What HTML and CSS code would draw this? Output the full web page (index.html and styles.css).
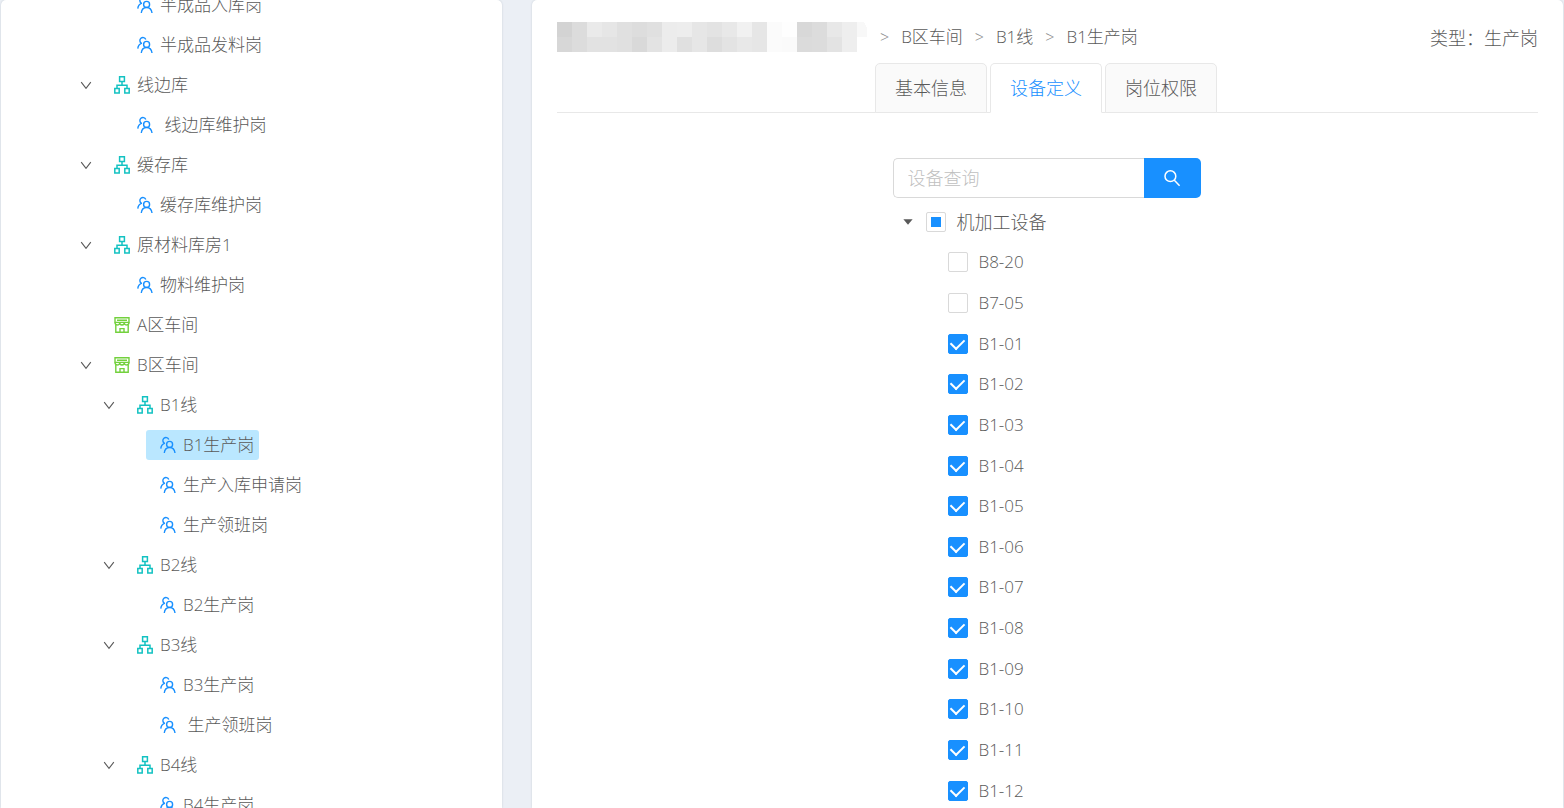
FILE: index.html
```html
<!DOCTYPE html>
<html lang="zh-CN">
<head>
<meta charset="utf-8">
<meta name="viewport" content="width=device-width, initial-scale=1">
<title>设备定义</title>
<link rel="stylesheet" href="styles.css">
</head>
<body>
<svg class="sprite" aria-hidden="true">
  <symbol id="people" viewBox="0 0 16 18">
    <g fill="none" stroke="currentColor" stroke-width="1.4">
      <circle cx="9.6" cy="8.4" r="3"/>
      <path d="M4.3 17c.3-3.3 2.4-5.5 5.3-5.5s5 2.2 5.4 5.5"/>
      <path d="M8.8 3.4A3.1 3.1 0 1 0 4.4 7.3M.8 12.6C1 9.9 2.4 8.1 5 7.2"/>
    </g>
  </symbol>
  <symbol id="apartment" viewBox="0 0 16 18">
    <path fill="none" stroke="currentColor" stroke-width="1.5" d="M5.6.8h4.8v4.6H5.6zM.8 12.6h4.4v4.5H.8zM10.8 12.6h4.4v4.5h-4.4zM8 5.4v3.8M3 12.6V9.2h10v3.4"/>
  </symbol>
  <symbol id="shop" viewBox="0 0 16 18">
    <g fill="none" stroke="currentColor" stroke-width="1.4">
      <path d="M1 1.8h14v4.6H1zM1.8 8.8v7.5h12.4V8.8M3 4.2h10M6 16.2v-3.6h4v3.6"/>
      <path d="M1 6.4c0 3.3 4.6 3.3 4.7.4 0 2.9 4.6 2.9 4.6 0 .1 2.9 4.7 2.9 4.7-.4"/>
    </g>
  </symbol>
  <symbol id="chevron" viewBox="0 0 12 12">
    <path fill="none" stroke="currentColor" stroke-width="1.1" d="M1.2 3.2 6 9.4l4.8-6.2"/>
  </symbol>
</svg>

<div class="layout">
  <aside class="panel side">
    <ul class="org">
      <li>
        <ul>
          <li><button class="node" type="button"><svg class="icon blue"><use href="#people"/></svg>半成品入库岗</button></li>
          <li><button class="node" type="button"><svg class="icon blue"><use href="#people"/></svg>半成品发料岗</button></li>
        </ul>
      </li>
      <li>
        <div class="row"><button class="toggle" type="button" aria-label="收起线边库"><svg><use href="#chevron"/></svg></button><button class="node" type="button"><svg class="icon teal"><use href="#apartment"/></svg>线边库</button></div>
        <ul>
          <li><button class="node" type="button"><svg class="icon blue"><use href="#people"/></svg>&nbsp;线边库维护岗</button></li>
        </ul>
      </li>
      <li>
        <div class="row"><button class="toggle" type="button" aria-label="收起缓存库"><svg><use href="#chevron"/></svg></button><button class="node" type="button"><svg class="icon teal"><use href="#apartment"/></svg>缓存库</button></div>
        <ul>
          <li><button class="node" type="button"><svg class="icon blue"><use href="#people"/></svg>缓存库维护岗</button></li>
        </ul>
      </li>
      <li>
        <div class="row"><button class="toggle" type="button" aria-label="收起原材料库房1"><svg><use href="#chevron"/></svg></button><button class="node" type="button"><svg class="icon teal"><use href="#apartment"/></svg>原材料库房1</button></div>
        <ul>
          <li><button class="node" type="button"><svg class="icon blue"><use href="#people"/></svg>物料维护岗</button></li>
        </ul>
      </li>
      <li><button class="node" type="button"><svg class="icon green"><use href="#shop"/></svg>A区车间</button></li>
      <li>
        <div class="row"><button class="toggle" type="button" aria-label="收起B区车间"><svg><use href="#chevron"/></svg></button><button class="node" type="button"><svg class="icon green"><use href="#shop"/></svg>B区车间</button></div>
        <ul>
          <li>
            <div class="row"><button class="toggle" type="button" aria-label="收起B1线"><svg><use href="#chevron"/></svg></button><button class="node" type="button"><svg class="icon teal"><use href="#apartment"/></svg>B1线</button></div>
            <ul>
              <li><button class="node selected" type="button"><svg class="icon blue"><use href="#people"/></svg>B1生产岗</button></li>
              <li><button class="node" type="button"><svg class="icon blue"><use href="#people"/></svg>生产入库申请岗</button></li>
              <li><button class="node" type="button"><svg class="icon blue"><use href="#people"/></svg>生产领班岗</button></li>
            </ul>
          </li>
          <li>
            <div class="row"><button class="toggle" type="button" aria-label="收起B2线"><svg><use href="#chevron"/></svg></button><button class="node" type="button"><svg class="icon teal"><use href="#apartment"/></svg>B2线</button></div>
            <ul>
              <li><button class="node" type="button"><svg class="icon blue"><use href="#people"/></svg>B2生产岗</button></li>
            </ul>
          </li>
          <li>
            <div class="row"><button class="toggle" type="button" aria-label="收起B3线"><svg><use href="#chevron"/></svg></button><button class="node" type="button"><svg class="icon teal"><use href="#apartment"/></svg>B3线</button></div>
            <ul>
              <li><button class="node" type="button"><svg class="icon blue"><use href="#people"/></svg>B3生产岗</button></li>
              <li><button class="node" type="button"><svg class="icon blue"><use href="#people"/></svg>&nbsp;生产领班岗</button></li>
            </ul>
          </li>
          <li>
            <div class="row"><button class="toggle" type="button" aria-label="收起B4线"><svg><use href="#chevron"/></svg></button><button class="node" type="button"><svg class="icon teal"><use href="#apartment"/></svg>B4线</button></div>
            <ul>
              <li><button class="node" type="button"><svg class="icon blue"><use href="#people"/></svg>B4生产岗</button></li>
            </ul>
          </li>
        </ul>
      </li>
    </ul>
  </aside>

  <main class="panel main">
    <header class="head">
      <nav class="crumbs" aria-label="位置">
        <svg class="mosaic" viewBox="0 0 311 30" shape-rendering="crispEdges" aria-hidden="true">
          <g>
            <path fill="#d3d3d3" d="M0 0h15v15H0z"/><path fill="#dcdcdc" d="M15 0h15v30H15z"/><path fill="#eaeaea" d="M30 0h15v15H30z"/><path fill="#e6e6e6" d="M45 0h15v15H45z"/><path fill="#e0e0e0" d="M60 0h15v30H60z"/><path fill="#dddddd" d="M75 0h15v15H75z"/><path fill="#e0e0e0" d="M90 0h15v15H90z"/><path fill="#ececec" d="M105 0h15v30h-15z"/><path fill="#ededed" d="M120 0h15v15h-15z"/><path fill="#e6e6e6" d="M135 0h15v30h-15z"/><path fill="#e3e3e3" d="M150 0h15v15h-15z"/><path fill="#e8e8e8" d="M165 0h15v15h-15z"/><path fill="#f1f1f1" d="M180 0h15v15h-15z"/><path fill="#e6e6e6" d="M195 0h15v30h-15z"/><path fill="#fbfbfb" d="M210 0h15v30h-15z"/><path fill="#fefefe" d="M225 0h15v15h-15z"/><path fill="#d8d8d8" d="M240 0h15v15h-15z"/><path fill="#dcdcdc" d="M255 0h15v30h-15z"/><path fill="#e8e8e8" d="M270 0h15v15h-15z"/><path fill="#eeeeee" d="M285 0h15v30h-15z"/><path fill="#f8f8f8" d="M300 0h7l3 6v9h-10z"/>
            <path fill="#d7d7d7" d="M0 15h15v15H0z"/><path fill="#e2e2e2" d="M30 15h30v15H30z"/><path fill="#d9d9d9" d="M75 15h15v15H75z"/><path fill="#e3e3e3" d="M90 15h15v15H90z"/><path fill="#e0e0e0" d="M120 15h15v15h-15z"/><path fill="#dddddd" d="M150 15h15v15h-15z"/><path fill="#e3e3e3" d="M165 15h15v15h-15z"/><path fill="#e8e8e8" d="M180 15h15v15h-15z"/><path fill="#fafafa" d="M225 15h15v15h-15z"/><path fill="#dbdbdb" d="M240 15h15v15h-15z"/><path fill="#e3e3e3" d="M270 15h15v15h-15z"/>
          </g>
        </svg>
        <span class="sep">&gt;</span><span>B区车间</span>
        <span class="sep">&gt;</span><span>B1线</span>
        <span class="sep">&gt;</span><span>B1生产岗</span>
      </nav>
      <span class="kind">类型：生产岗</span>
    </header>

    <div class="tabs" role="tablist">
      <button class="tab" type="button" role="tab">基本信息</button>
      <button class="tab active" type="button" role="tab" aria-selected="true">设备定义</button>
      <button class="tab" type="button" role="tab">岗位权限</button>
    </div>

    <section class="devices">
      <form class="search">
        <input class="query" type="text" placeholder="设备查询" aria-label="设备查询">
        <button class="go" type="button" aria-label="查询">
          <svg viewBox="0 0 18 18"><path fill="none" stroke="currentColor" stroke-width="1.5" d="M11.6 11.6 16.6 16.8M12.8 7.2a5.4 5.4 0 1 1-10.8 0a5.4 5.4 0 1 1 10.8 0z"/></svg>
        </button>
      </form>
      <div class="group">
        <button class="caret" type="button" aria-label="收起机加工设备"><svg viewBox="0 0 10 6"><path fill="currentColor" d="M.4.2h9.2L5 5.8z"/></svg></button>
        <label class="check"><input class="box partial" type="checkbox" aria-checked="mixed">机加工设备</label>
      </div>
      <ul class="list">
        <li><label class="check"><input class="box" type="checkbox">B8-20</label></li>
        <li><label class="check"><input class="box" type="checkbox">B7-05</label></li>
        <li><label class="check"><input class="box" type="checkbox" checked>B1-01</label></li>
        <li><label class="check"><input class="box" type="checkbox" checked>B1-02</label></li>
        <li><label class="check"><input class="box" type="checkbox" checked>B1-03</label></li>
        <li><label class="check"><input class="box" type="checkbox" checked>B1-04</label></li>
        <li><label class="check"><input class="box" type="checkbox" checked>B1-05</label></li>
        <li><label class="check"><input class="box" type="checkbox" checked>B1-06</label></li>
        <li><label class="check"><input class="box" type="checkbox" checked>B1-07</label></li>
        <li><label class="check"><input class="box" type="checkbox" checked>B1-08</label></li>
        <li><label class="check"><input class="box" type="checkbox" checked>B1-09</label></li>
        <li><label class="check"><input class="box" type="checkbox" checked>B1-10</label></li>
        <li><label class="check"><input class="box" type="checkbox" checked>B1-11</label></li>
        <li><label class="check"><input class="box" type="checkbox" checked>B1-12</label></li>
      </ul>
    </section>
  </main>
</div>
</body>
</html>
```
FILE: styles.css
```css
* {
  box-sizing: border-box;
}

body {
  margin: 0;
  background: #ebeff5;
  color: #595959;
  font: 300 18px/30px "Open Sans", "Noto Sans CJK SC", sans-serif;
}

button,
input {
  font: inherit;
  color: inherit;
}

button {
  border: 0;
  padding: 0;
  background: none;
  cursor: pointer;
}

ul {
  margin: 0;
  padding: 0;
  list-style: none;
}

.sprite {
  position: absolute;
  width: 0;
  height: 0;
}

.layout {
  display: grid;
  grid-template-columns: minmax(0, 501fr) minmax(0, 1031fr);
  gap: 30px;
  height: 100vh;
  padding: 0 1px;
  overflow: hidden;
}

.panel {
  overflow: hidden;
  background: #fff;
  border-radius: 5px 5px 0 0;
  box-shadow: 0 0 2px #c3c9d2;
}

/* Organisation tree */
.org {
  margin-top: -15px;
  padding-left: 73px;
  font-size: 17px;
}

.org ul {
  padding-left: 23px;
}

.org li {
  display: flow-root;
}

.row {
  display: flex;
}

.toggle {
  display: grid;
  place-items: center;
  width: 24px;
  height: 40px;
}

.toggle svg {
  width: 12px;
  height: 12px;
}

.node {
  display: flex;
  align-items: center;
  gap: 7px;
  height: 30px;
  margin: 5px 0 5px 26px;
  padding: 0 5px 0 14px;
  border-radius: 3px;
  white-space: pre;
}

.row .node {
  margin-left: 2px;
}

.selected {
  background: #bae7ff;
}

.icon {
  width: 16px;
  height: 18px;
}

.blue {
  color: #1890ff;
}

.teal {
  color: #13c2c2;
}

.green {
  color: #73d13d;
}

/* Detail panel */
.main {
  padding: 22px 25px 0;
}

.head,
.crumbs {
  display: flex;
  align-items: center;
}

.head {
  justify-content: space-between;
}

.crumbs {
  gap: 12px;
  height: 30px;
  font-size: 17px;
  line-height: 32px;
}

.kind {
  line-height: 32px;
  height: 30px;
}

.mosaic {
  width: 311px;
  height: 30px;
}

.sep {
  color: #8c8c8c;
  font-size: 16px;
}

.tabs {
  display: flex;
  justify-content: center;
  margin-top: 11px;
  border-bottom: 1px solid #e8e8e8;
}

.tab {
  height: 50px;
  margin: 0 3px -1px 0;
  padding: 0 19px;
  border: 1px solid #e8e8e8;
  border-radius: 5px 5px 0 0;
  background: #fafafa;
}

.active {
  border-bottom-color: #fff;
  background: #fff;
  color: #1890ff;
}

.devices {
  width: 310px;
  margin: 45px auto 0;
  padding-right: 2px;
}

.search {
  display: flex;
  height: 40px;
}

.query {
  flex: 1;
  min-width: 0;
  padding: 0 14px;
  border: 1px solid #d9d9d9;
  border-right: 0;
  border-radius: 5px 0 0 5px;
  outline: 0;
}

.query::placeholder {
  color: #bfbfbf;
}

.go {
  display: grid;
  place-items: center;
  width: 57px;
  border-radius: 0 5px 5px 0;
  background: #1890ff;
  color: #fff;
}

.go svg {
  width: 18px;
  height: 18px;
}

.group {
  display: flex;
  align-items: center;
  height: 40px;
  margin-top: 4px;
}

.caret {
  display: grid;
  place-items: center;
  width: 30px;
  height: 30px;
  margin-right: 3px;
}

.caret svg {
  width: 10px;
  height: 6px;
}

.list {
  display: grid;
  grid-auto-rows: 1fr;
  min-height: 569px;
  padding-left: 55px;
  font-size: 17px;
}

.list li {
  display: flex;
  align-items: center;
}

.check {
  display: flex;
  align-items: center;
  gap: 11px;
}

.box {
  display: grid;
  place-items: center;
  appearance: none;
  width: 20px;
  height: 20px;
  margin: 0;
  border: 1px solid #d9d9d9;
  border-radius: 2px;
  background: #fff;
}

.box:checked {
  border-color: #1890ff;
  background: #1890ff;
}

.box:checked::before {
  content: "";
  width: 7px;
  height: 11px;
  margin-bottom: 3px;
  border: solid #fff;
  border-width: 0 2px 2px 0;
  transform: rotate(45deg);
}

.partial::before {
  content: "";
  width: 10px;
  height: 10px;
  background: #1890ff;
}
```
